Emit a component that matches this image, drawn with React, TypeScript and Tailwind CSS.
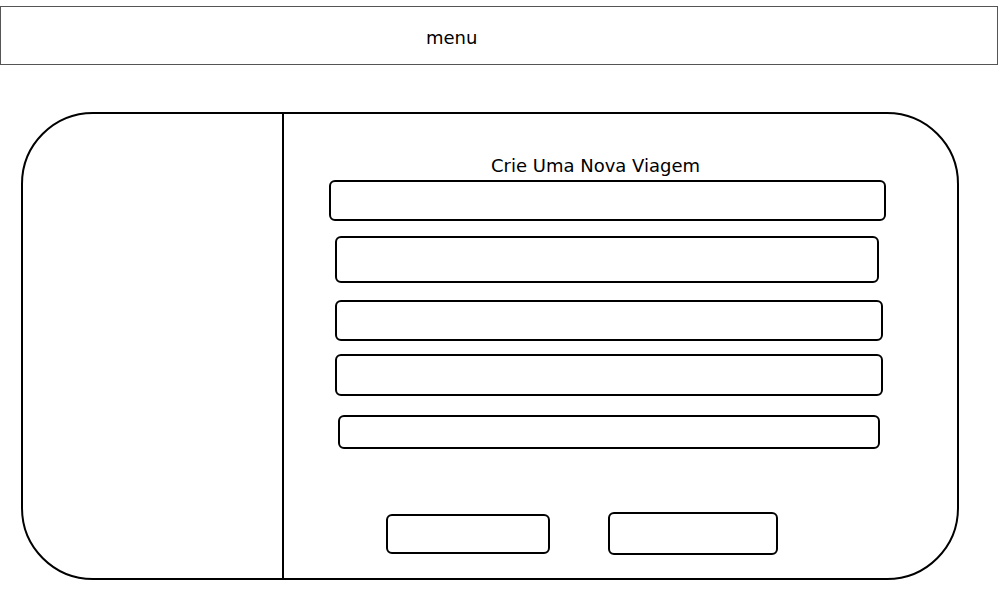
export default function App() {
  const font = { fontFamily: '"DejaVu Sans", sans-serif' };
  return (
    <div className="w-[1000px] h-[600px] bg-white pt-[6px]" style={font}>
      <div className="w-[998px] h-[59px] border border-[#555] flex items-center pl-[425px] pt-[4px] text-[18px] leading-[20px] text-black">
        menu
      </div>
      <div className="mt-[47px] ml-[21px] w-[938px] h-[468px] border-2 border-black rounded-[72px] flex overflow-hidden">
        <div className="w-[261px] h-full border-r-2 border-black shrink-0" />
        <div className="flex flex-col items-start">
          <div className="mt-[42px] ml-[207px] h-[20px] text-[18px] leading-[20px] text-black whitespace-nowrap">
            Crie Uma Nova Viagem
          </div>
          <div className="mt-[4px] ml-[45px] w-[557px] h-[41px] border-2 border-black rounded-[6px]" />
          <div className="mt-[15px] ml-[51px] w-[544px] h-[47px] border-2 border-black rounded-[6px]" />
          <div className="mt-[17px] ml-[51px] w-[548px] h-[41px] border-2 border-black rounded-[6px]" />
          <div className="mt-[13px] ml-[51px] w-[548px] h-[42px] border-2 border-black rounded-[6px]" />
          <div className="mt-[19px] ml-[54px] w-[542px] h-[34px] border-2 border-black rounded-[6px]" />
          <div className="mt-[63px] ml-[102px] flex items-start gap-[58px]">
            <div className="mt-[2px] w-[164px] h-[40px] border-2 border-black rounded-[6px]" />
            <div className="w-[170px] h-[43px] border-2 border-black rounded-[6px]" />
          </div>
        </div>
      </div>
    </div>
  );
}
